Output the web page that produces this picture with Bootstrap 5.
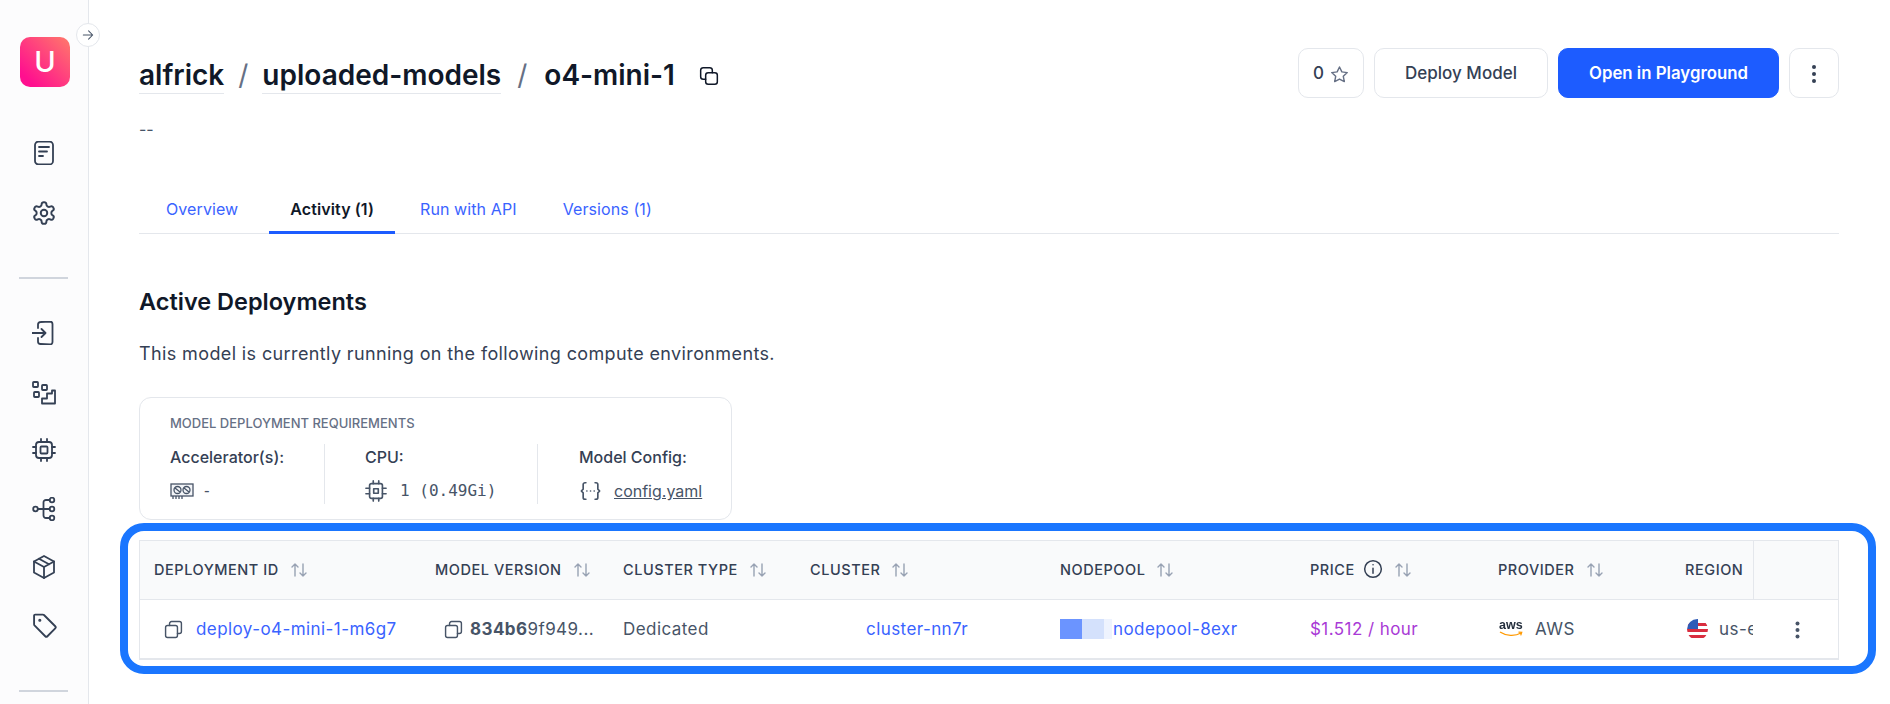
<!DOCTYPE html>
<html lang="en">
<head>
<meta charset="utf-8">
<title>o4-mini-1</title>
<link href="https://cdn.jsdelivr.net/npm/bootstrap@5.3.0/dist/css/bootstrap.min.css" rel="stylesheet">
<script src="https://cdn.jsdelivr.net/npm/bootstrap@5.3.0/dist/js/bootstrap.bundle.min.js"></script>
<style>
html,body{height:704px;overflow:hidden}
body{font-family:Inter,"Liberation Sans",sans-serif;color:#344054;background:#fff;font-size:16px}
svg.ic{fill:none;stroke:currentColor;stroke-width:1.8;stroke-linecap:round;stroke-linejoin:round;flex:none;display:block}
.rail{width:89px;height:704px;flex:none;background:#fcfcfd;border-right:1px solid #e4e7ec;position:relative;padding-top:37px;color:#344054}
.logo-tile{width:50px;height:50px;border-radius:10px;margin-left:20px;background:linear-gradient(45deg,#ff0f8f 15%,#ff7a6a 100%);color:#fff;font-size:29px;font-weight:500;line-height:50px;text-align:center}
.rail-toggle{position:absolute;left:76px;top:23px;width:24px;height:24px;border-radius:50%;background:#fff;border:1px solid #e4e7ec;color:#475467;padding:0}
.rail-icon{width:88px;height:24px;justify-content:center;align-items:center;margin-top:34px}
.rail-sep{height:2px;width:49px;margin-left:19px;background:#d0d5dd}
.stage{flex:1;min-width:0;padding:48px 51px 0 50px}
.crumb{font-size:28px;font-weight:600;line-height:54px;color:#101828;height:50px}
.crumb .seg{border-bottom:1px solid #e4e7ec;display:inline-block;height:46px;color:#101828;text-decoration:none}
.crumb .sl{color:#667085;font-weight:400;margin:0 14px}
.crumb .sl-wide{margin:0 17px 0 16px}
.act{height:50px;border:1px solid #e4e7ec;border-radius:10px;background:#fff;color:#344054;font-weight:500;font-size:17px;padding:2px 0 0}
.act-primary{background:#1d5cff;border-color:#1d5cff;color:#fff;font-weight:600;width:221px;font-size:16.800px}
.dash{font-size:16px;color:#475467;line-height:24px;margin-top:19px}
.tabbar{margin-top:50px;border-bottom:1px solid #e4e7ec;height:43px;padding-left:6px;gap:10px}
.tabbar .nav-link{padding:0 21px;height:43px;line-height:36px;letter-spacing:.1px;color:#3a63ff;font-size:16px;border-bottom:3px solid transparent;border-radius:0}
.tabbar .nav-link.active{color:#101828;font-weight:600;border-bottom-color:#1d5cff}
.tabbar .nav-item+.nav-item+.nav-item{margin-left:-6px}
.sect{font-size:23.500px;font-weight:600;color:#101828;line-height:32px;margin:52px 0 23px}
.intro{font-size:18px;letter-spacing:.38px;line-height:26px;color:#344054;margin:0 0 30px}
.req{width:593px;height:123px;border:1px solid #e4e7ec;border-radius:12px;padding:16px 25px 0 30px}
.req-title{font-size:13px;line-height:18px;color:#667085;font-weight:500;margin-bottom:12px}
.req-col{height:60px}
.req-col+.req-col{border-left:1px solid #e4e7ec}
.c1{width:154px}.c2{width:213px;padding-left:40px}.c3{padding-left:41px}
.req-k{font-size:16px;font-weight:500;color:#344054;line-height:26px;margin-bottom:10px}
.req-v{font-family:"DejaVu Sans Mono","Liberation Mono",monospace;font-size:16px;color:#475467;line-height:22px}
.req-gap{margin-left:13px}
.req-link{font-family:Inter,sans-serif;font-size:16px;color:#475467;margin-left:12px}
.halo{margin:3px -37px 0 -19px;border:8px solid #1a76ff;border-radius:24px;padding:9px 29px 6px 11px;background:#fff}
.clipbox{overflow:hidden;border:1px solid #e4e7ec;border-width:1px 1px 2px 1px}
.dtable{table-layout:fixed;width:1700px;margin:0;border-collapse:separate;border-spacing:0}
.dtable th{background:#f9fafb;height:59px;font-size:14.500px;font-weight:500;letter-spacing:.55px;color:#344054;padding:0 0 0 14px;border-bottom:1px solid #e4e7ec;vertical-align:middle;white-space:nowrap;overflow:hidden}
.dtable td{height:58px;font-size:17px;letter-spacing:.43px;color:#475467;padding:2px 0 0 14px;vertical-align:middle;white-space:nowrap;overflow:hidden;border:0}
.dtable a{color:#3a63ff;text-decoration:none}
svg.ic.sort{color:#98a2b3;stroke-width:1.4;margin-left:11px;display:inline-block;vertical-align:-3px}
.pinned{position:sticky;right:0;border-left:1px solid #e4e7ec;box-shadow:-2px 0 2px rgba(16,24,40,.08);padding:0!important;text-align:center;background-clip:padding-box}
td.pinned{background:#fff;padding-left:4px!important}
.np{display:inline-block;height:20px;vertical-align:-4px}
.np1{width:22px;background:#6b94ff}.np2{width:22px;background:#d4e1fc}.np3{width:8px;background:#eef3fe;margin-right:1px}
.price{color:#a93ad6!important}
.aws{width:24px;height:20px;position:relative;display:inline-block;vertical-align:-5px;margin:0 12px 0 1px}
.aws b{position:absolute;left:0;top:-2px;font-family:"Liberation Sans",sans-serif;font-size:12.500px;font-weight:700;letter-spacing:0;color:#252f3e;line-height:14px}
.aws svg{position:absolute;left:0;top:11px}
</style>
</head>
<body class="d-flex">
<aside class="rail">
  <div class="logo-tile">U</div>
  <button class="rail-toggle d-flex align-items-center justify-content-center" type="button" aria-label="Expand">
    <svg class="ic" width="14" height="14" viewBox="0 0 24 24"><path d="M4 12h16M13 5l7 7-7 7"/></svg>
  </button>
  <div class="rail-icon d-flex" style="margin-top:54px"><svg class="ic" width="24" height="24" viewBox="0 0 24 24"><rect x="3" y="0.5" width="18" height="23" rx="3.5"/><path d="M7 6h10M7 10.5h8M7 15h4"/></svg></div>
  <div class="rail-icon d-flex" style="margin-top:36px"><svg class="ic" width="26" height="26" viewBox="0 0 24 24"><path d="M12.2 2h-.4a2 2 0 0 0-2 2v.2a2 2 0 0 1-1 1.7l-.4.3a2 2 0 0 1-2 0l-.2-.1a2 2 0 0 0-2.7.7l-.2.4a2 2 0 0 0 .7 2.7l.2.1a2 2 0 0 1 1 1.7v.5a2 2 0 0 1-1 1.8l-.2.1a2 2 0 0 0-.7 2.7l.2.4a2 2 0 0 0 2.7.7l.2-.1a2 2 0 0 1 2 0l.4.3a2 2 0 0 1 1 1.7v.2a2 2 0 0 0 2 2h.4a2 2 0 0 0 2-2v-.2a2 2 0 0 1 1-1.7l.4-.3a2 2 0 0 1 2 0l.2.1a2 2 0 0 0 2.7-.7l.2-.4a2 2 0 0 0-.7-2.7l-.2-.1a2 2 0 0 1-1-1.8v-.5a2 2 0 0 1 1-1.7l.2-.1a2 2 0 0 0 .7-2.7l-.2-.4a2 2 0 0 0-2.7-.7l-.2.1a2 2 0 0 1-2 0l-.4-.3a2 2 0 0 1-1-1.7V4a2 2 0 0 0-2-2z"/><circle cx="12" cy="12" r="3"/></svg></div>
  <div class="rail-sep" style="margin-top:52px"></div>
  <div class="rail-icon d-flex" style="margin-top:42px"><svg class="ic" width="24" height="24" viewBox="0 0 24 24"><path d="M6 7V3.500A2.500 2.500 0 0 1 8.500 1L18 .5A2.500 2.500 0 0 1 20.500 3v18a2.500 2.500 0 0 1-2.500 2.500L8.500 23A2.500 2.500 0 0 1 6 20.500V17"/><path d="M0 12h13M9.500 8l4 4-4 4"/></svg></div>
  <div class="rail-icon d-flex" style="margin-top:36px"><svg class="ic" width="24" height="24" viewBox="0 0 24 24"><rect x="1" y="1" width="5" height="5" rx=".8"/><rect x="10" y="4" width="5" height="5" rx=".8"/><rect x="2" y="11" width="5" height="5" rx=".8"/><path d="M10 22.500v-5h5v-5h5v-3h3v13z"/></svg></div>
  <div class="rail-icon d-flex" style="margin-top:33px"><svg class="ic" width="24" height="24" viewBox="0 0 24 24"><rect x="4" y="4" width="16" height="16" rx="3"/><rect x="8.500" y="8.500" width="7" height="7" rx="1"/><path d="M9 1v3M15 1v3M9 20v3M15 20v3M1 9h3M1 15h3M20 9h3M20 15h3"/></svg></div>
  <div class="rail-icon d-flex" style="margin-top:35px"><svg class="ic" width="24" height="24" viewBox="0 0 24 24"><circle cx="3.500" cy="12" r="2.300"/><circle cx="20" cy="3" r="2.300"/><circle cx="20" cy="12" r="2.300"/><circle cx="20" cy="21" r="2.300"/><path d="M6 12h11.500M17.700 3H14a2.500 2.500 0 0 0-2.500 2.500v13A2.500 2.500 0 0 0 14 21h3.700"/></svg></div>
  <div class="rail-icon d-flex"><svg class="ic" width="24" height="24" viewBox="0 0 24 24"><path d="M12 1 22 6.500v11L12 23 2 17.500v-11z"/><path d="M2 6.500 12 12l10-5.500M12 12v11M7 3.800 17 9.300"/></svg></div>
  <div class="rail-icon d-flex"><svg class="ic" width="25" height="25" viewBox="0 0 24 24"><path d="M2 2.500A1 1 0 0 1 3 1.500h7.500a1.500 1.500 0 0 1 1 .4L22.300 12.700a1.500 1.500 0 0 1 0 2.100l-7.500 7.500a1.500 1.500 0 0 1-2.100 0L2.400 11.900a1.500 1.500 0 0 1-.4-1z"/><circle cx="7.500" cy="7" r=".6" fill="currentColor"/></svg></div>
  <div class="rail-sep" style="margin-top:53px"></div>
</aside>
<main class="stage">
  <div class="d-flex justify-content-between align-items-start">
    <div class="crumb d-flex">
      <a class="seg" href="#">alfrick</a><span class="sl">/</span><a class="seg" href="#">uploaded-models</a><span class="sl sl-wide">/</span><span>o4-mini-1</span>
      <svg class="ic ms-4" style="margin-top:18px;color:#101828" width="20" height="20" viewBox="0 0 24 24"><rect x="8" y="8" width="14" height="14" rx="3"/><path d="M16 8V5a3 3 0 0 0-3-3H5a3 3 0 0 0-3 3v8a3 3 0 0 0 3 3h3"/></svg>
    </div>
    <div class="d-flex" style="gap:10px">
      <button class="btn act d-flex align-items-center justify-content-center" style="width:66px;gap:6px" type="button">0 <svg class="ic" style="color:#667085" width="19" height="19" viewBox="0 0 24 24"><path d="M12 2.500l3 6.200 6.800.9-5 4.700 1.300 6.700-6.100-3.300-6.100 3.300 1.300-6.700-5-4.700 6.800-.9z"/></svg></button>
      <button class="btn act" style="width:174px" type="button">Deploy Model</button>
      <button class="btn act act-primary" type="button">Open in Playground</button>
      <button class="btn act d-flex align-items-center justify-content-center" style="width:50px" type="button" aria-label="More"><svg width="4" height="20" viewBox="0 0 4 20" fill="#344054"><circle cx="2" cy="3" r="2"/><circle cx="2" cy="10" r="2"/><circle cx="2" cy="17" r="2"/></svg></button>
    </div>
  </div>
  <div class="dash">--</div>
  <ul class="nav tabbar">
    <li class="nav-item"><a class="nav-link" href="#">Overview</a></li>
    <li class="nav-item"><a class="nav-link active" href="#">Activity (1)</a></li>
    <li class="nav-item"><a class="nav-link" href="#">Run with API</a></li>
    <li class="nav-item"><a class="nav-link" href="#">Versions (1)</a></li>
  </ul>
  <h2 class="sect">Active Deployments</h2>
  <p class="intro">This model is currently running on the following compute environments.</p>
  <section class="req">
    <div class="req-title">MODEL DEPLOYMENT REQUIREMENTS</div>
    <div class="d-flex">
      <div class="req-col c1">
        <div class="req-k">Accelerator(s):</div>
        <div class="req-v d-flex align-items-center"><svg width="24" height="20" viewBox="0 0 24 20" fill="none" stroke="#475467" stroke-width="1.300"><rect x="1" y="3" width="22" height="12" fill="#f2f4f7"/><circle cx="7.500" cy="9" r="3.500"/><circle cx="16.500" cy="9" r="3.500"/><path d="M5 7l5 4M14 7l5 4M3 15v3M6 15v3M9 15v3M12 15v3"/></svg><span class="ms-2">-</span></div>
      </div>
      <div class="req-col c2">
        <div class="req-k">CPU:</div>
        <div class="req-v d-flex align-items-center"><svg class="ic" width="22" height="22" viewBox="0 0 24 24" stroke-width="1.800"><rect x="5" y="4" width="14" height="16" rx="2"/><rect x="9.500" y="9.500" width="5" height="5"/><path d="M9 1v3M15 1v3M9 20v3M15 20v3M1 9h4M1 15h4M19 9h4M19 15h4"/></svg><span class="req-gap">1 (0.49Gi)</span></div>
      </div>
      <div class="req-col c3">
        <div class="req-k">Model Config:</div>
        <div class="req-v d-flex align-items-center"><svg class="ic" width="23" height="22" viewBox="0 0 24 24"><path d="M7 3H6a2 2 0 0 0-2 2v5l-2 2 2 2v5a2 2 0 0 0 2 2h1M17 3h1a2 2 0 0 1 2 2v5l2 2-2 2v5a2 2 0 0 1-2 2h-1M8 12h.1M12 12h.1M16 12h.1"/></svg><a class="req-link" href="#">config.yaml</a></div>
      </div>
    </div>
  </section>
  <section class="halo">
    <div class="clipbox">
      <table class="table dtable">
        <colgroup><col style="width:281px"><col style="width:188px"><col style="width:187px"><col style="width:250px"><col style="width:250px"><col style="width:188px"><col style="width:187px"><col style="width:84px"><col style="width:85px"></colgroup>
        <thead><tr>
          <th>DEPLOYMENT ID<svg class="ic sort" width="18" height="16" viewBox="0 0 18 16"><path d="M5 14V2M2 5l3-3 3 3M13 2v12M10 11l3 3 3-3"/></svg></th>
          <th>MODEL VERSION<svg class="ic sort" width="18" height="16" viewBox="0 0 18 16"><path d="M5 14V2M2 5l3-3 3 3M13 2v12M10 11l3 3 3-3"/></svg></th>
          <th>CLUSTER TYPE<svg class="ic sort" width="18" height="16" viewBox="0 0 18 16"><path d="M5 14V2M2 5l3-3 3 3M13 2v12M10 11l3 3 3-3"/></svg></th>
          <th>CLUSTER<svg class="ic sort" width="18" height="16" viewBox="0 0 18 16"><path d="M5 14V2M2 5l3-3 3 3M13 2v12M10 11l3 3 3-3"/></svg></th>
          <th>NODEPOOL<svg class="ic sort" width="18" height="16" viewBox="0 0 18 16"><path d="M5 14V2M2 5l3-3 3 3M13 2v12M10 11l3 3 3-3"/></svg></th>
          <th>PRICE<svg class="ic d-inline-block ms-2" style="vertical-align:-4px" width="20" height="20" viewBox="0 0 24 24"><circle cx="12" cy="12" r="10"/><path d="M12 11v6M12 7h.1"/></svg><svg class="ic sort" width="18" height="16" viewBox="0 0 18 16"><path d="M5 14V2M2 5l3-3 3 3M13 2v12M10 11l3 3 3-3"/></svg></th>
          <th>PROVIDER<svg class="ic sort" width="18" height="16" viewBox="0 0 18 16"><path d="M5 14V2M2 5l3-3 3 3M13 2v12M10 11l3 3 3-3"/></svg></th>
          <th>REGION</th>
          <th class="pinned"></th>
        </tr></thead>
        <tbody><tr>
          <td><svg class="ic d-inline-block" style="vertical-align:-4px;margin:0 13px 0 10px" width="19" height="19" viewBox="0 0 24 24"><rect x="2" y="7" width="15" height="15" rx="2.500"/><path d="M7 7V4.500A2.500 2.500 0 0 1 9.500 2h10A2.500 2.500 0 0 1 22 4.500v10a2.500 2.500 0 0 1-2.500 2.500H17"/></svg><a href="#">deploy-o4-mini-1-m6g7</a></td>
          <td><svg class="ic d-inline-block" style="vertical-align:-4px;margin:0 7px 0 9px" width="19" height="19" viewBox="0 0 24 24"><rect x="2" y="7" width="15" height="15" rx="2.500"/><path d="M7 7V4.500A2.500 2.500 0 0 1 9.500 2h10A2.500 2.500 0 0 1 22 4.500v10a2.500 2.500 0 0 1-2.500 2.500H17"/></svg><span><b>834b6</b>9f949...</span></td>
          <td>Dedicated</td>
          <td style="padding-left:70px"><a href="#">cluster-nn7r</a></td>
          <td><span class="np np1"></span><span class="np np2"></span><span class="np np3"></span><a href="#">nodepool-8exr</a></td>
          <td class="price">$1.512 / hour</td>
          <td><span class="aws"><b>aws</b><svg width="25" height="7" viewBox="0 0 25 7" fill="none" stroke="#f90" stroke-width="1.300"><path d="M1 1c6 4 15 4.500 21 1M19.500 1.200l3.200.2-1 3"/></svg></span>AWS</td>
          <td style="text-overflow:clip"><svg class="d-inline-block" style="vertical-align:-5px;margin:0 11px 0 2px" width="21" height="21" viewBox="0 0 21 21"><defs><clipPath id="fc"><circle cx="10.500" cy="10.500" r="10.500"/></clipPath></defs><g clip-path="url(#fc)"><rect width="21" height="21" fill="#fff"/><path d="M0 4h21v3H0zM0 10h21v3H0zM0 16h21v3H0z" fill="#d92d3f"/><rect width="11" height="10" fill="#2f5bb7"/></g></svg>us-east-1</td>
          <td class="pinned"><svg width="5" height="18" viewBox="0 0 5 18" fill="#475467"><circle cx="2.500" cy="2.500" r="2"/><circle cx="2.500" cy="9" r="2"/><circle cx="2.500" cy="15.500" r="2"/></svg></td>
        </tr></tbody>
      </table>
    </div>
  </section>
</main>
</body>
</html>
